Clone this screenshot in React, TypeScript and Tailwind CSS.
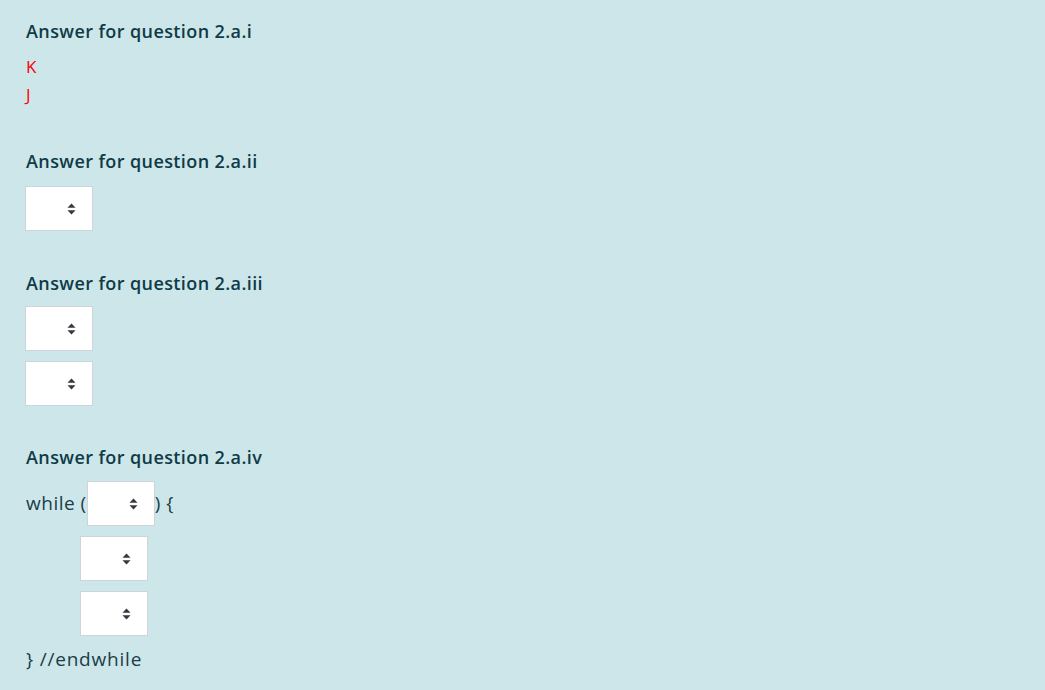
import React from 'react';

const font = { fontFamily: '"Open Sans", "Noto Sans", sans-serif' };

function SelectBox() {
  return (
    <span className="inline-flex w-[68px] h-[45px] bg-white border border-[#ced4da] items-center justify-end pr-[16px] align-middle">
      <svg width="9" height="12" viewBox="0 0 9 12">
        <path d="M4.5 0.5 L8.5 4.8 L0.5 4.8 Z" fill="#343a40" />
        <path d="M4.5 11.5 L8.5 7.2 L0.5 7.2 Z" fill="#343a40" />
      </svg>
    </span>
  );
}

function Heading({ children }: { children: React.ReactNode }) {
  return <h3 className="text-[18px] font-semibold text-[#0f3b46] leading-[24px] tracking-[0.4px]">{children}</h3>;
}

export default function App() {
  return (
    <div className="min-h-screen w-full bg-[#cde6ea] pl-[26px] pt-[19px]" style={font}>
      <Heading>Answer for question 2.a.i</Heading>
      <div className="mt-[10px] text-[17px] leading-[28px] text-[#ff0000]">
        <div>K</div>
        <div>J</div>
      </div>

      <div className="mt-[40px]">
        <Heading>Answer for question 2.a.ii</Heading>
        <div className="mt-[13px] flex flex-col -ml-px">
          <SelectBox />
        </div>
      </div>

      <div className="mt-[40px]">
        <Heading>Answer for question 2.a.iii</Heading>
        <div className="mt-[11px] flex flex-col gap-[10px] -ml-px">
          <SelectBox />
          <SelectBox />
        </div>
      </div>

      <div className="mt-[39px]">
        <Heading>Answer for question 2.a.iv</Heading>
        <div className="mt-[12px] text-[19px] tracking-[0.8px] text-[#1a3d48]">
          <div className="flex items-center tracking-[0.5px]">
            <span>while (</span>
            <SelectBox />
            <span>) {'{'}</span>
          </div>
          <div className="flex flex-col gap-[10px] pl-[54px] mt-[10px]">
            <SelectBox />
            <SelectBox />
          </div>
          <div className="mt-[6px] leading-[34px]">{'} //endwhile'}</div>
        </div>
      </div>
    </div>
  );
}
